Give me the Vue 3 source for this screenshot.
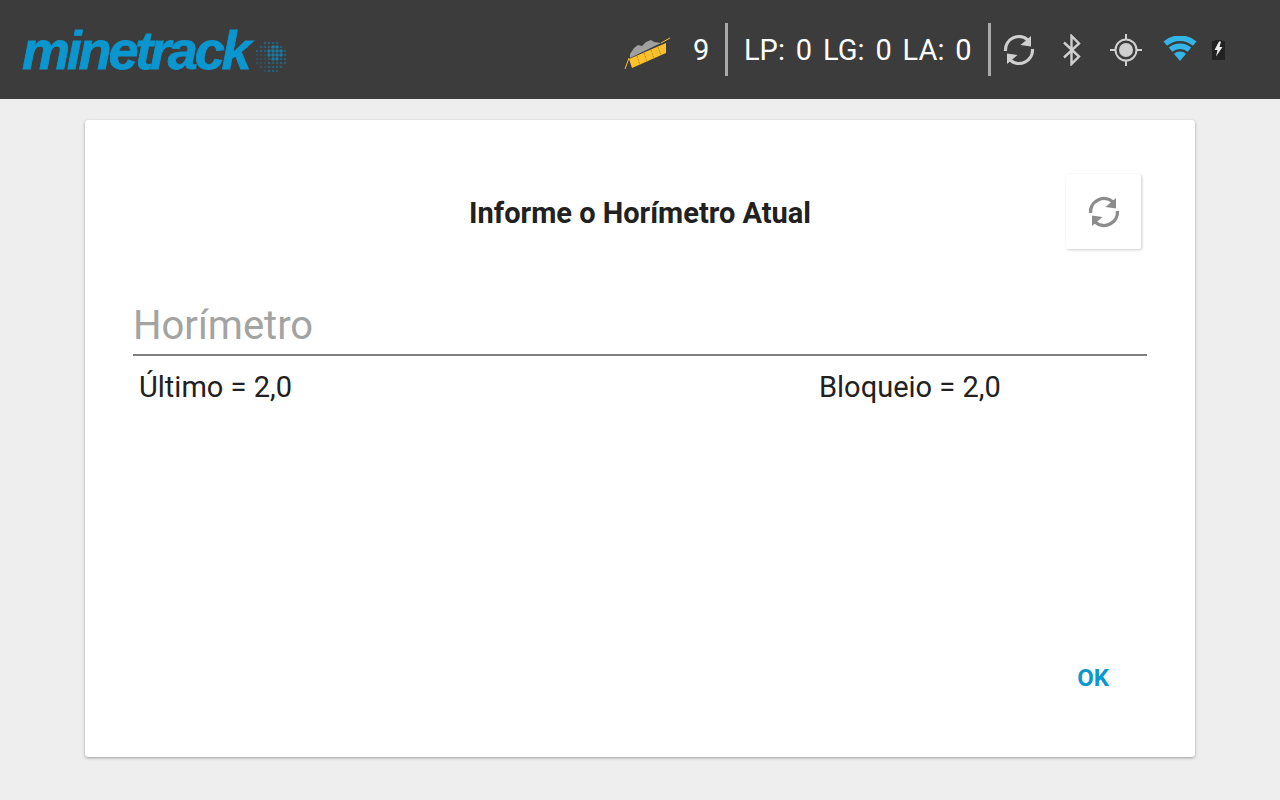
<script setup>
// dots of the little globe beside the logo
const dots = []
for (let row = 0; row < 8; row++) {
  for (let col = 0; col < 8; col++) {
    const dx = col - 3.5
    const dy = row - 3.5
    const d = Math.sqrt(dx * dx + dy * dy)
    if (d > 4.3) continue
    const inner = Math.abs(dx - 0.8) + Math.abs(dy + 0.8)
    dots.push({
      x: 2 + col * 4,
      y: 2 + row * 4,
      r: inner < 2.5 ? 1.8 : 1.3,
      o: dx < -1 && dy > -1 ? 0.2 : inner < 2.5 ? 0.7 : 0.4
    })
  }
}
</script>

<template>
  <div class="page">
    <header class="bar">
      <div class="logo">
        <span class="logo-text">minetrack</span>
        <svg class="globe" width="32" height="32" viewBox="0 0 32 32">
          <circle v-for="(d, i) in dots" :key="i" :cx="d.x" :cy="d.y" :r="d.r" fill="#0a96cf" :opacity="d.o" />
        </svg>
      </div>

      <div class="status">
        <svg class="truck" width="48" height="36" viewBox="0 0 48 36">
          <path d="M6 20l4-6 4-3 4 1 4-4 5-2 3 2 7 1L6 24z" fill="#a0a0a0" />
          <path d="M5 25L42 9v10L8 34z" fill="#fbc02d" />
          <path d="M13 22l3 9M20 19l3 9M27 16l3 9M34 13l3 8" stroke="#c98f10" stroke-width="1" stroke-dasharray="2 1" fill="none" />
          <path d="M37 9l9-5M5 24L1 35" stroke="#fbc02d" stroke-width="1" fill="none" />
        </svg>
        <span class="count">9</span>
        <i class="divider"></i>
        <span class="counters">LP: 0 LG: 0 LA: 0</span>
        <i class="divider second"></i>

        <svg class="sync-top" width="32" height="32" viewBox="0 0 32 32">
          <path d="M2.500 17A13.500 13.500 0 0 1 25 6" fill="none" stroke="#cfcfcf" stroke-width="3.200" />
          <path d="M28 2V12.500L17.500 11z" fill="#cfcfcf" />
          <path d="M29.500 15A13.500 13.500 0 0 1 7 26" fill="none" stroke="#cfcfcf" stroke-width="3.200" />
          <path d="M4 30V19.500L14.500 21z" fill="#cfcfcf" />
        </svg>
        <svg class="bt" width="20" height="32" viewBox="0 0 20 32">
          <path d="M2 8.500L17 22.500 9.500 30V2L17 9.500 2 23.500" fill="none" stroke="#cfcfcf" stroke-width="2.400" />
        </svg>
        <svg class="gps" width="32" height="32" viewBox="0 0 32 32">
          <circle cx="16" cy="16" r="10.500" fill="none" stroke="#cfcfcf" stroke-width="2" />
          <circle cx="16" cy="16" r="7" fill="#cfcfcf" />
          <path d="M16 0v6M16 26v6M0 16h6M26 16h6" stroke="#cfcfcf" stroke-width="2" />
        </svg>
        <svg class="wifi" width="34" height="26" viewBox="0 0 34 26">
          <path d="M0.500 5.400A25.600 25.600 0 0 1 33.500 5.400L29.900 9.700A20 20 0 0 0 4.100 9.700z" fill="#33b5e5" />
          <path d="M5.800 11.600A17.500 17.500 0 0 1 28.200 11.600L24.700 15.800A12 12 0 0 0 9.300 15.800z" fill="#33b5e5" />
          <path d="M10.900 17.700A9.500 9.500 0 0 1 23.100 17.700L17 25z" fill="#33b5e5" />
        </svg>
        <svg class="battery" width="13" height="20" viewBox="0 0 13 20">
          <path d="M3 0h7v1h3v19H0V1h3z" fill="#222" />
          <path d="M7 1.500L2.500 10h3L4 16.500 10.500 7H7.500L9 1.500z" fill="#eee" />
        </svg>
      </div>
    </header>

    <main class="card">
      <div class="title-row">
        <h1 class="title">Informe o Horímetro Atual</h1>
        <button class="refresh">
          <svg width="32" height="32" viewBox="0 0 32 32">
            <path d="M2.500 17A13.500 13.500 0 0 1 25 6" fill="none" stroke="#8c8c8c" stroke-width="3.400" />
            <path d="M28 2V12.500L17.500 11z" fill="#8c8c8c" />
            <path d="M29.500 15A13.500 13.500 0 0 1 7 26" fill="none" stroke="#8c8c8c" stroke-width="3.400" />
            <path d="M4 30V19.500L14.500 21z" fill="#8c8c8c" />
          </svg>
        </button>
      </div>

      <div class="field">Horímetro</div>

      <div class="info">
        <span class="last">Último = 2,0</span>
        <span>Bloqueio = 2,0</span>
      </div>

      <div class="actions">
        <span class="ok">OK</span>
      </div>
    </main>
  </div>
</template>

<style scoped>
.page {
  width: 1280px;
  height: 800px;
  overflow: hidden;
  background: #eeeeee;
  font-family: Roboto, "Liberation Sans", sans-serif;
}

.bar {
  height: 99px;
  background: #3c3c3c;
  display: flex;
  align-items: center;
  padding-left: 22px;
}

.logo {
  display: flex;
  align-items: center;
  width: 265px;
  height: 99px;
}

.logo-text {
  font-family: "Liberation Sans", Arial, sans-serif;
  font-style: italic;
  font-weight: 700;
  font-size: 54px;
  letter-spacing: -3.200px;
  line-height: 54px;
  color: #0a96cf;
  -webkit-text-stroke: 0.8px #0a96cf;
  width: 233px;
  flex: none;
}

.globe {
  flex: none;
  margin-top: 14px;
}

.status {
  display: flex;
  align-items: center;
  height: 99px;
  margin-left: 337px;
  color: #ffffff;
}

.truck {
  flex: none;
  margin-top: 4px;
}

.count,
.counters {
  font-size: 29px;
  font-weight: 400;
  white-space: nowrap;
}

.count {
  margin-left: 21px;
  width: 15px;
}

.counters {
  word-spacing: 3.700px;
  margin-left: 16px;
  width: 228px;
}

.divider {
  display: block;
  width: 3px;
  height: 53px;
  background: #a9a9a9;
  margin-left: 17px;
}

.divider.second {
  margin-left: 16px;
}

.sync-top {
  margin-left: 12px;
  flex: none;
}

.bt {
  margin-left: 27px;
  flex: none;
}

.gps {
  margin-left: 28px;
  flex: none;
}

.wifi {
  margin-left: 21px;
  flex: none;
  margin-bottom: 1px;
}

.battery {
  margin-left: 15px;
  flex: none;
}

.card {
  box-sizing: border-box;
  width: 1110px;
  height: 637px;
  margin: 21px 0 0 85px;
  padding: 54px 48px 0;
  background: #ffffff;
  border-radius: 3px;
  box-shadow: 0 1px 3px rgba(0, 0, 0, 0.35);
  display: flex;
  flex-direction: column;
}

.title-row {
  display: grid;
  grid-template-columns: 1fr auto 1fr;
  align-items: center;
  height: 75px;
}

.title {
  grid-column: 2;
  margin: 3px 0 0;
  font-size: 29px;
  font-weight: 700;
  color: #212121;
  white-space: nowrap;
}

.refresh {
  grid-column: 3;
  justify-self: end;
  margin-right: 6px;
  width: 75px;
  height: 75px;
  padding: 0;
  border: none;
  border-radius: 2px;
  background: #ffffff;
  box-shadow: 1px 1px 3px rgba(0, 0, 0, 0.2);
  display: flex;
  align-items: center;
  justify-content: center;
}

.field {
  margin-top: 51px;
  height: 56px;
  line-height: 52px;
  box-sizing: border-box;
  font-size: 40px;
  color: #a3a3a3;
  border-bottom: 2px solid #808080;
}

.info {
  display: flex;
  margin-top: 14px;
  padding-left: 6px;
  font-size: 29px;
  line-height: 34px;
  color: #212121;
}

.last {
  width: 680px;
}

.actions {
  margin-top: auto;
  height: 93px;
  display: flex;
  justify-content: flex-end;
  padding-right: 38px;
}

.ok {
  font-size: 24px;
  font-weight: 700;
  line-height: 28px;
  color: #0b97d0;
}
</style>
